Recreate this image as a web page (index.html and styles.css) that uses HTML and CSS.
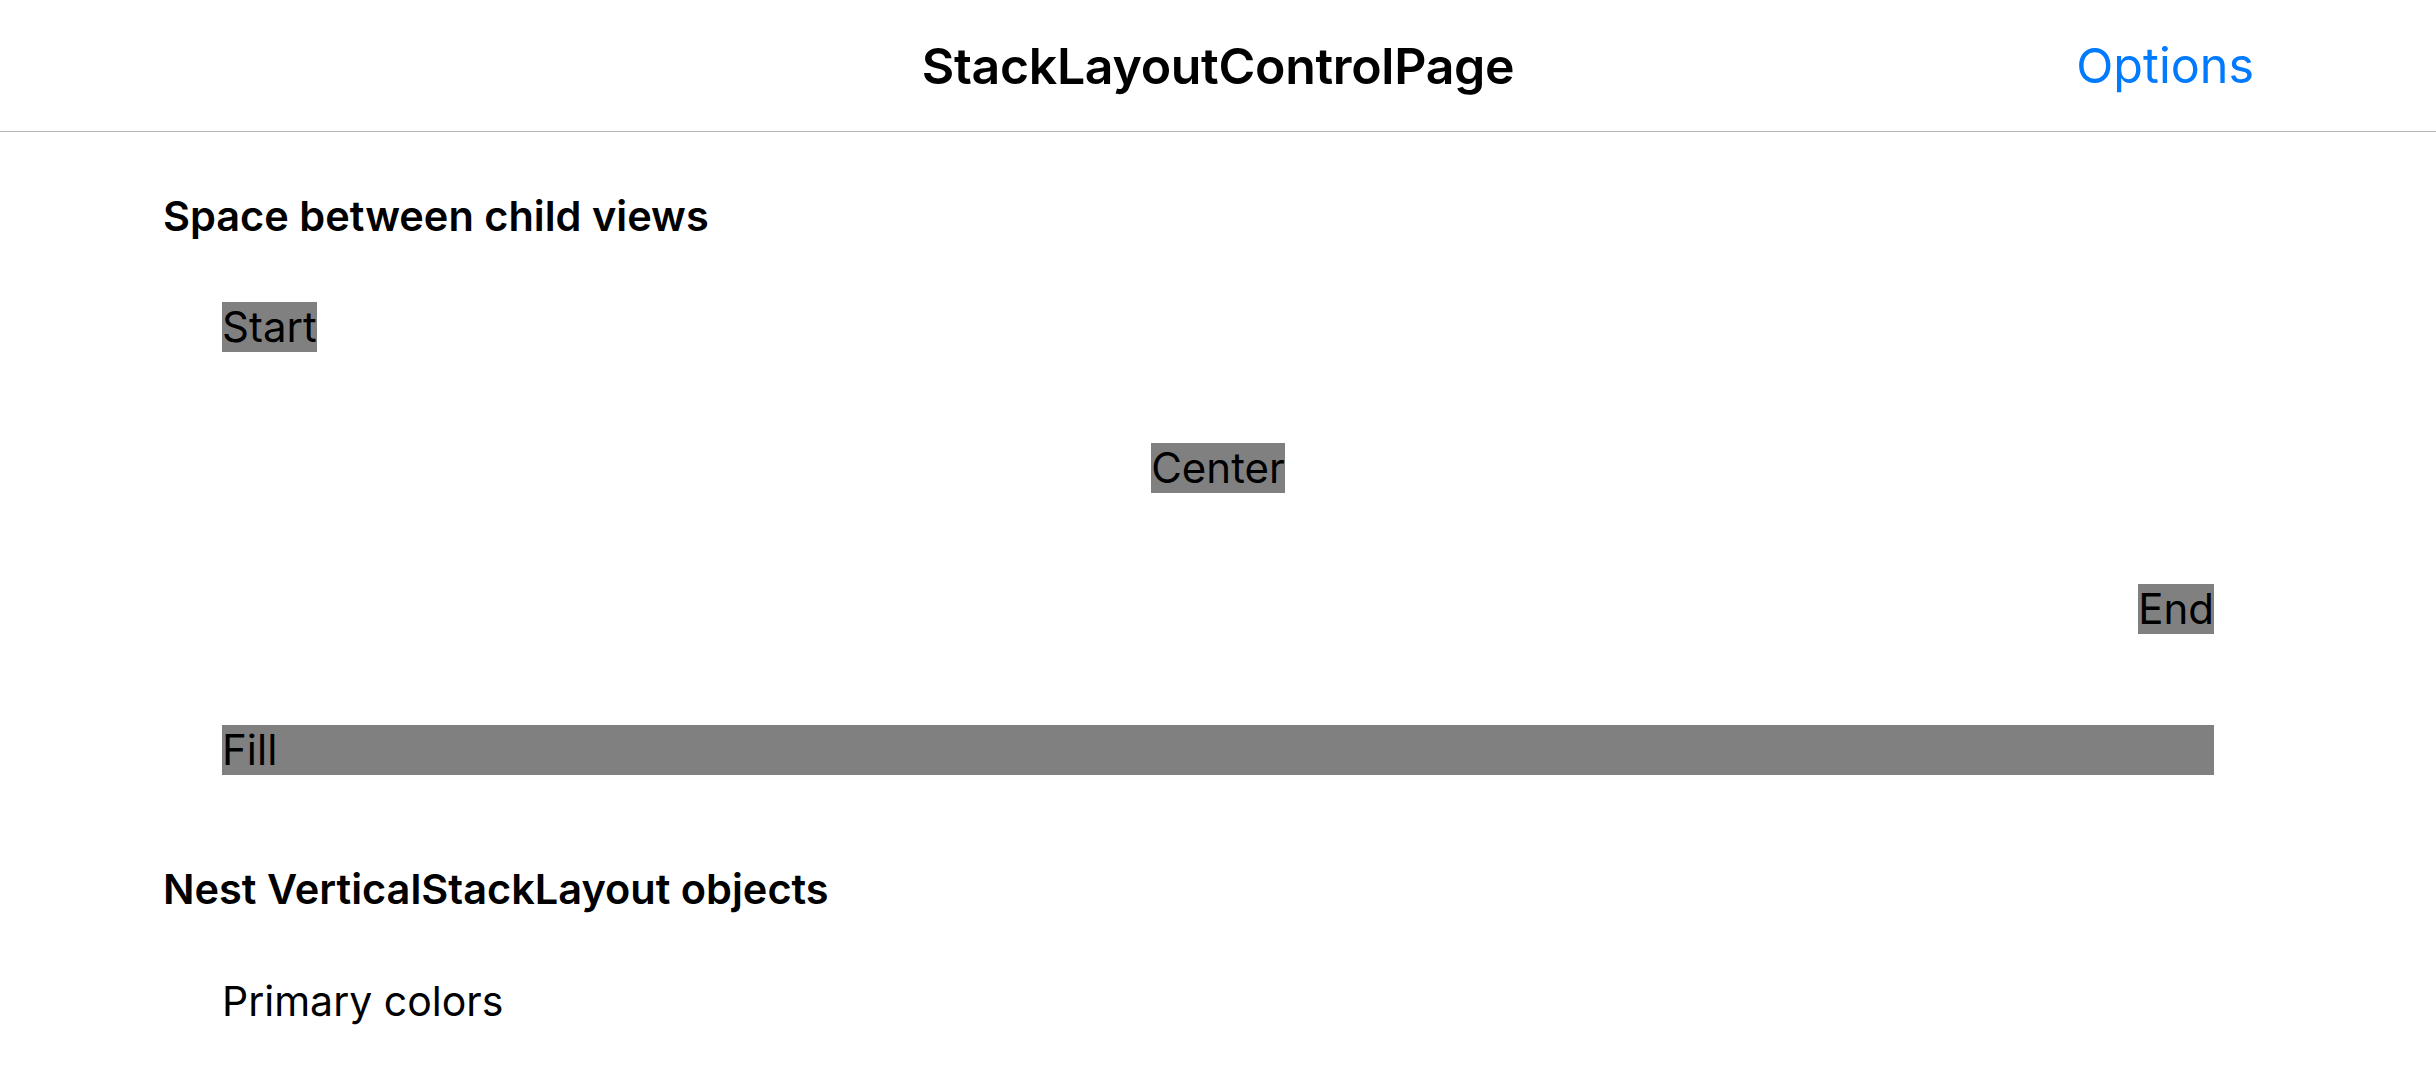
FILE: index.html
```html
<!DOCTYPE html>
<html>
<head>
<meta charset="utf-8">
<link rel="stylesheet" href="styles.css">
</head>
<body>
<header class="navbar">
  <div class="nav-side"></div>
  <div class="nav-title">StackLayoutControlPage</div>
  <div class="nav-side nav-right"><span class="nav-button">Options</span></div>
</header>
<main class="content">
  <section class="section">
    <h2 class="heading">Space between child views</h2>
    <div class="stack">
      <div class="row row-start"><span class="label">Start</span></div>
      <div class="row row-center"><span class="label">Center</span></div>
      <div class="row row-end"><span class="label">End</span></div>
      <div class="row row-fill"><span class="label">Fill</span></div>
    </div>
  </section>
  <section class="section">
    <h2 class="heading">Nest VerticalStackLayout objects</h2>
    <div class="stack stack-plain">
      <div class="plain">Primary colors</div>
    </div>
  </section>
</main>
</body>
</html>
```
FILE: styles.css
```css
html, body {
  margin: 0;
  padding: 0;
  background: #ffffff;
  font-family: Inter, "Noto Sans", sans-serif;
  color: #000000;
}
body {
  width: 2436px;
  height: 1084px;
  overflow: hidden;
}
.navbar {
  height: 131px;
  border-bottom: 1px solid #b3b3b3;
  display: grid;
  grid-template-columns: 1fr auto 1fr;
  align-items: center;
}
.nav-title {
  font-size: 50px;
  font-weight: 600;
  letter-spacing: -0.3px;
}
.nav-right {
  display: flex;
  justify-content: flex-end;
  padding-right: 182px;
}
.nav-button {
  font-size: 48.5px;
  color: #007aff;
  font-weight: 400;
}
.content {
  padding: 0 163px;
}
.section {
  display: flex;
  flex-direction: column;
}
.heading {
  margin: 57px 0 0 0;
  font-size: 41.5px;
  line-height: 54px;
  font-weight: 600;
}
.section + .section .heading {
  margin-top: 87px;
}
.stack {
  display: flex;
  flex-direction: column;
  gap: 91px;
  margin: 59px 59px 0 59px;
}
.row {
  display: flex;
  height: 50px;
}
.row-start { justify-content: flex-start; }
.row-center { justify-content: center; }
.row-end { justify-content: flex-end; }
.label {
  background: #808080;
  font-size: 42px;
  line-height: 50px;
  height: 50px;
  display: block;
}
.row-fill .label {
  flex: 1;
}
.stack-plain {
  margin-top: 60px;
}
.plain {
  font-size: 41px;
  line-height: 50px;
}
```
